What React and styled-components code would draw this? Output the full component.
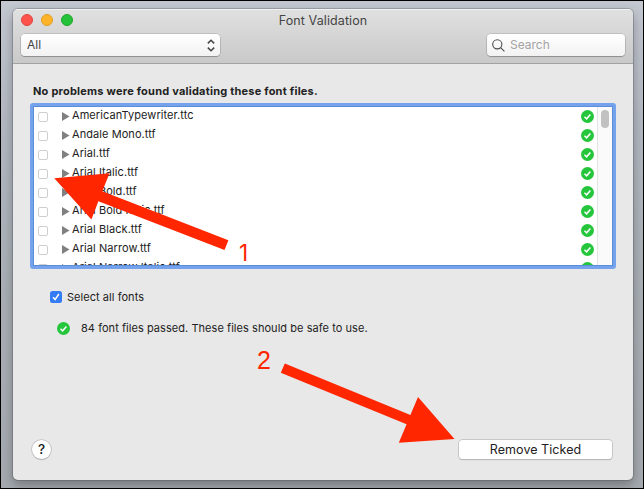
import React from "react";
import styled, { createGlobalStyle } from "styled-components";

const GlobalStyle = createGlobalStyle`
  * { box-sizing: border-box; }
  body { margin: 0; overflow: hidden; font-family: Inter, "Liberation Sans", sans-serif; color: #222; }
`;

const Desktop = styled.div`
  position: relative;
  width: 644px;
  height: 489px;
  padding: 8px 10px 8px 12px;
  border: 1px solid #000;
  background: linear-gradient(180deg, #c3c7d0 0%, #b3b8c1 25%, #a9afb5 60%, #a5aab0 100%);
  overflow: hidden;
`;

const Window = styled.main`
  display: flex;
  flex-direction: column;
  width: 620px;
  height: 471px;
  border-radius: 5px;
  background: #e8e8e8;
  overflow: hidden;
  box-shadow: 0 0 0 1px rgba(70, 75, 85, 0.3), 0 5px 12px rgba(0, 0, 0, 0.3);
`;

const Header = styled.header`
  height: 55px;
  flex: none;
  border-top: 1px solid #f2f2f2;
  border-bottom: 1px solid #a2a2a2;
  background: linear-gradient(#e0e0e0, #c9c9c9);
`;

const TitleBar = styled.div`
  display: grid;
  grid-template-columns: 100px 1fr 100px;
  height: 23px;
`;

const Lights = styled.div`
  display: flex;
  gap: 8px;
  padding: 4px 0 0 8px;
`;

const Light = styled.span`
  width: 12px;
  height: 12px;
  border-radius: 50%;
  background: ${(p) => p.$fill};
  border: 1px solid ${(p) => p.$edge};
`;

const Title = styled.h1`
  margin: 0 0 0 0;
  font-size: 12.5px;
  font-weight: 400;
  line-height: 22px;
  text-align: center;
  color: #444;
  letter-spacing: 0.1px;
`;

const Toolbar = styled.div`
  display: flex;
  justify-content: space-between;
  padding: 1px 8px 0 8px;
`;

const Field = styled.div`
  display: flex;
  align-items: center;
  width: ${(p) => p.$width}px;
  height: 22px;
  padding: ${(p) => p.$pad};
  border-radius: 4px;
  background: linear-gradient(#fff, #f2f2f2);
  box-shadow: 0 0 0 0.5px rgba(0, 0, 0, 0.22), 0 1px 1px rgba(0, 0, 0, 0.22);
  font-size: 12px;
  color: ${(p) => p.$color};
  svg { flex: none; }
`;

const FieldText = styled.span`
  flex: 1;
  margin: -1px 0 0 ${(p) => p.$indent || 0}px;
`;

const Content = styled.section`
  flex: 1;
  display: flex;
  flex-direction: column;
  padding: 19px 17px 21px;
`;

const Heading = styled.h2`
  margin: 0 0 0 3px;
  height: 20px;
  line-height: 17px;
  font-size: 11px;
  font-weight: 700;
  letter-spacing: 0.22px;
  white-space: nowrap;
`;

const ListFrame = styled.div`
  display: flex;
  height: 166px;
  flex: none;
  border: 3px solid #74a2ed;
  border-radius: 3px;
  background: #fff;
`;

const ListInner = styled.div`
  display: flex;
  flex: 1;
  border: 1px solid #5b8dd8;
  overflow: hidden;
`;

const Rows = styled.ul`
  flex: 1;
  margin: 0;
  padding: 0;
  list-style: none;
`;

const Row = styled.li`
  display: grid;
  grid-template-columns: 10px 7px 1fr 13px;
  align-items: center;
  height: 19px;
  padding: 0 3px 0 4px;
`;

const Box = styled.span`
  width: 10px;
  height: 10px;
  border: 1px solid #cfcfcf;
  border-radius: 2px;
  background: #fff;
`;

const Disclosure = styled.svg`
  display: block;
  margin: -1px 0 0 14px;
  width: 8px;
  height: 9px;
`;

const FileName = styled.span`
  margin: -2px 0 0 17px;
  font-size: 11px;
  line-height: 15px;
  letter-spacing: 0.07px;
  white-space: nowrap;
`;

const Passed = styled.svg`
  display: block;
  flex: none;
  width: 13px;
  height: 13px;
`;

const Track = styled.div`
  width: 15px;
  padding: 3px 0 0 3px;
  border-left: 1px solid #e4e4e4;
  background: #fafafa;
`;

const Thumb = styled.div`
  width: 8px;
  height: 18px;
  border-radius: 4px;
  background: #c1c1c1;
`;

const Line = styled.div`
  display: flex;
  align-items: center;
  gap: ${(p) => p.$gap}px;
  height: 18px;
  margin: ${(p) => p.$margin};
  font-size: 11px;
  letter-spacing: 0.05px;
  white-space: nowrap;
`;

const Footer = styled.footer`
  display: flex;
  align-items: center;
  justify-content: space-between;
  margin-top: auto;
  padding: 0 4px 0 2px;
`;

const Button = styled.button`
  width: ${(p) => (p.$round ? 19 : 153)}px;
  height: 19px;
  padding: 0;
  border: 0;
  border-radius: ${(p) => (p.$round ? "50%" : "3.5px")};
  background: #fff;
  box-shadow: 0 0 0 0.75px #bdbdbd, 0 1px 1px rgba(0, 0, 0, 0.28);
  color: #222;
  font-family: inherit;
  font-size: ${(p) => (p.$round ? 13.5 : 12.5)}px;
  font-weight: ${(p) => (p.$round ? 500 : 400)};
  line-height: 19px;
  letter-spacing: ${(p) => (p.$round ? 0 : 0.05)}px;
`;

const Annotations = styled.svg`
  position: absolute;
  left: -1px;
  top: -1px;
  pointer-events: none;
`;

const StepNumber = styled.text`
  font-family: ${(p) => p.$face};
  font-size: ${(p) => p.$size}px;
`;

const files = [
  "AmericanTypewriter.ttc",
  "Andale Mono.ttf",
  "Arial.ttf",
  "Arial Italic.ttf",
  "Arial Bold.ttf",
  "Arial Bold Italic.ttf",
  "Arial Black.ttf",
  "Arial Narrow.ttf",
  "Arial Narrow Italic.ttf",
];

const PassIcon = () => (
  <Passed viewBox="0 0 13 13">
    <circle cx="6.5" cy="6.5" r="6.5" fill="#25c63b" />
    <path d="M3.5 6.8 5.6 8.8 9.4 4.4" fill="none" stroke="#fff" strokeWidth="1.5" />
  </Passed>
);

export default function App() {
  return (
    <Desktop>
      <GlobalStyle />
      <Window>
        <Header>
          <TitleBar>
            <Lights>
              <Light $fill="#fe524c" $edge="#e2443f" />
              <Light $fill="#feb429" $edge="#e19d24" />
              <Light $fill="#25c138" $edge="#1fa72f" />
            </Lights>
            <Title>Font Validation</Title>
          </TitleBar>
          <Toolbar>
            <Field $width={199} $pad="0 5px 0 6px" $color="#444">
              <FieldText>All</FieldText>
              <svg width="8" height="13" viewBox="0 0 8 13" fill="none" stroke="#444" strokeWidth="1.5">
                <path d="M.8 4.4 4 1.3 7.2 4.4M.8 8.6 4 11.7 7.2 8.6" />
              </svg>
            </Field>
            <Field $width={138} $pad="0 5px" $color="#a3a3a3">
              <svg width="13" height="13" viewBox="0 0 13 13" fill="none" stroke="#4c4c4c" strokeWidth="1.1">
                <circle cx="5.3" cy="5.3" r="4.6" />
                <path d="m8.6 8.6 3.8 3.8" />
              </svg>
              <FieldText $indent={5}>Search</FieldText>
            </Field>
          </Toolbar>
        </Header>
        <Content>
          <Heading>No problems were found validating these font files.</Heading>
          <ListFrame>
            <ListInner>
              <Rows>
                {files.map((name) => (
                  <Row key={name}>
                    <Box />
                    <Disclosure viewBox="0 0 8 9">
                      <path d="M0 0 7.5 4.5 0 9Z" fill="#808080" />
                    </Disclosure>
                    <FileName>{name}</FileName>
                    <PassIcon />
                  </Row>
                ))}
              </Rows>
              <Track>
                <Thumb />
              </Track>
            </ListInner>
          </ListFrame>
          <Line $gap={5} $margin="19px 0 0 20px">
            <svg width="12" height="12" viewBox="0 0 12 12">
              <rect width="12" height="12" rx="2.5" fill="#347cf6" />
              <path d="M3 6.3 5.1 8.6 8.9 3" fill="none" stroke="#fff" strokeWidth="1.5" />
            </svg>
            <span>Select all fonts</span>
          </Line>
          <Line $gap={11} $margin="13px 0 0 27px">
            <PassIcon />
            <span>84 font files passed. These files should be safe to use.</span>
          </Line>
          <Footer>
            <Button $round aria-label="Help">?</Button>
            <Button>Remove Ticked</Button>
          </Footer>
        </Content>
      </Window>
      <Annotations width="644" height="489" viewBox="0 0 644 489" fill="#ff2600">
        <path d="M54.3 178.3 109.5 173.3 102.3 191.3 228.4 240.3 224.5 250 98.4 201.3 91.4 219.5Z" />
        <path d="M454.5 439 418 397 410.4 415 284.8 363.6 280.8 372.8 406.6 424.3 398.8 442.8Z" />
        <StepNumber x="239" y="260.5" $size={22.5} $face="Inter, sans-serif">1</StepNumber>
        <StepNumber x="257" y="369" $size={25} $face='"Liberation Sans", Arial, sans-serif'>2</StepNumber>
      </Annotations>
    </Desktop>
  );
}
